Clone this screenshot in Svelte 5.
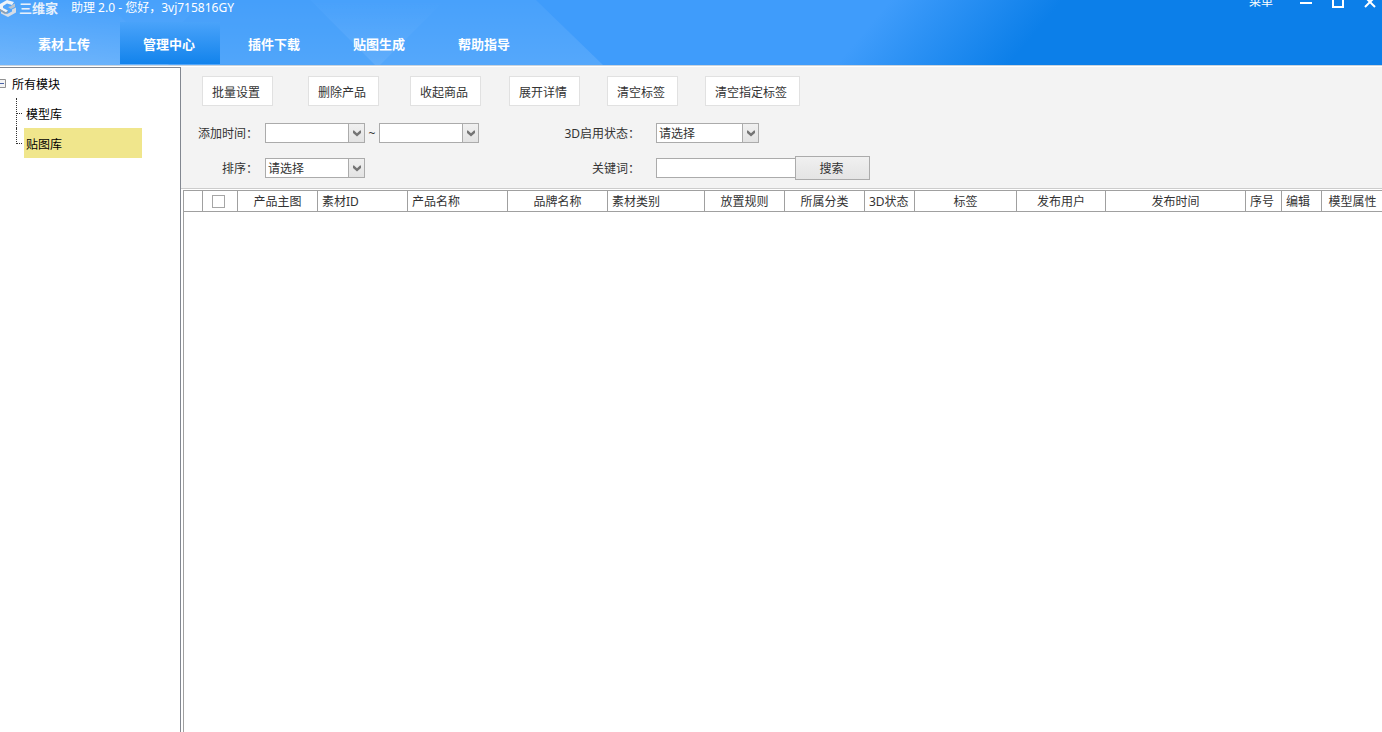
<script>
	let tabs = ['素材上传', '管理中心', '插件下载', '贴图生成', '帮助指导'];
	let activeTab = '管理中心';

	let actions = ['批量设置', '删除产品', '收起商品', '展开详情', '清空标签', '清空指定标签'];

	let modules = ['模型库', '贴图库'];
	let activeModule = '贴图库';

	let columns = [
		{ name: '', width: 19 },
		{ name: 'check', width: 35 },
		{ name: '产品主图', width: 80 },
		{ name: '素材ID', width: 90, left: true },
		{ name: '产品名称', width: 100, left: true },
		{ name: '品牌名称', width: 100 },
		{ name: '素材类别', width: 97, left: true },
		{ name: '放置规则', width: 80 },
		{ name: '所属分类', width: 80 },
		{ name: '3D状态', width: 50, left: true },
		{ name: '标签', width: 102 },
		{ name: '发布用户', width: 89 },
		{ name: '发布时间', width: 140 },
		{ name: '序号', width: 36, left: true },
		{ name: '编辑', width: 40, left: true },
		{ name: '模型属性', width: 61 },
	];

	let keyword = '';
	let allChecked = false;
</script>

{#snippet arrow()}
	<span class="arrow">
		<svg width="8" height="7" viewBox="0 0 8 7" aria-hidden="true">
			<path d="M0 0.5V3L4 6.5L8 3V0.5H7L4 3.2L1 0.5Z" fill="#757575" />
		</svg>
	</span>
{/snippet}

<div class="app">
	<header>
		<svg class="shapes" width="720" height="65" viewBox="0 0 720 65" aria-hidden="true">
			<defs>
				<linearGradient id="glow" x1="0" y1="0" x2="0" y2="1">
					<stop offset="0" stop-color="#fff" stop-opacity="0" />
					<stop offset="1" stop-color="#fff" stop-opacity="0.07" />
				</linearGradient>
				<linearGradient id="corner" x1="0" y1="1" x2="0.4" y2="0">
					<stop offset="0" stop-color="#fff" stop-opacity="0.16" />
					<stop offset="1" stop-color="#fff" stop-opacity="0" />
				</linearGradient>
			</defs>
			<path d="M0 0H536L603 65H0Z" fill="#fff" fill-opacity="0.05" />
			<path d="M0 0H536L603 65H0Z" fill="url(#glow)" />
			<path d="M0 0H104L169 65H0Z" fill="url(#corner)" />
			<path d="M310 0H445L380 65H375Z" fill="url(#glow)" />
			<path d="M205 0H310L375 65H140Z" fill="#0a7be6" fill-opacity="0.04" />
		</svg>

		<div class="titlebar">
			<svg class="logo" width="16" height="18" viewBox="0 0 16 18" aria-hidden="true">
				<path d="M0 4L7 0L14 2L12 5L7 3.5L3 6V8L8 10.5L6 12.5L0 9Z" fill="#eef3f8" />
				<path d="M12 5L15 3.5V7L11 9L8 7L11 6Z" fill="#b9c5d0" />
				<path d="M16 7.5V12.5L8 17L1 13.5V11L7 14L12 11.5V9.5Z" fill="#d5dde6" />
				<path d="M0 9L6 12.5L8 10.5V12.5L5 14L0 11Z" fill="#8fa0b0" />
			</svg>
			<strong>三维家</strong>
			<span class="title">助理 2.0 - 您好，3vj715816GY</span>
			<div class="window">
				<button class="menu">菜单</button>
				<button aria-label="最小化">
					<svg width="12" height="12" viewBox="0 0 12 12"><path d="M0 7H12" stroke="#fff" stroke-width="2" /></svg>
				</button>
				<button aria-label="最大化">
					<svg width="12" height="12" viewBox="0 0 12 12"><path d="M1 1H11V11H1Z" fill="none" stroke="#fff" stroke-width="2" /></svg>
				</button>
				<button aria-label="关闭">
					<svg width="12" height="12" viewBox="0 0 12 12"><path d="M1 1L11 11M11 1L1 11" stroke="#fff" stroke-width="2" /></svg>
				</button>
			</div>
		</div>

		<nav>
			{#each tabs as tab}
				<button class:active={tab === activeTab} on:click={() => (activeTab = tab)}>{tab}</button>
			{/each}
		</nav>
	</header>

	<div class="body">
		<aside>
			<button class="root">
				<svg width="6" height="9" viewBox="0 0 6 9" aria-hidden="true">
					<path d="M0 0.5H5.5V8.5H0" fill="#f4f4f4" stroke="#919191" />
					<path d="M0 4.5H4" stroke="#4b63a7" />
				</svg>
				<span>所有模块</span>
			</button>
			<ul>
				{#each modules as module}
					<li>
						<button class:selected={module === activeModule} on:click={() => (activeModule = module)}>{module}</button>
					</li>
				{/each}
			</ul>
		</aside>

		<main>
			<section class="panel">
				<div class="actions">
					{#each actions as action}
						<button>{action}</button>
					{/each}
				</div>

				<form on:submit|preventDefault>
					<label for="from">添加时间：</label>
					<div class="field">
						<span class="combo">
							<select id="from"><option></option></select>
							{@render arrow()}
						</span>
						<span class="tilde">~</span>
						<span class="combo">
							<select aria-label="结束时间"><option></option></select>
							{@render arrow()}
						</span>
					</div>
					<label for="state">3D启用状态：</label>
					<div class="field">
						<span class="combo wide">
							<select id="state"><option>请选择</option></select>
							{@render arrow()}
						</span>
					</div>

					<label for="sort">排序：</label>
					<div class="field">
						<span class="combo">
							<select id="sort"><option>请选择</option></select>
							{@render arrow()}
						</span>
					</div>
					<label for="keyword">关键词：</label>
					<div class="field">
						<input id="keyword" type="text" bind:value={keyword} />
						<button class="search">搜索</button>
					</div>
				</form>
			</section>

			<section class="grid">
				<table>
					<colgroup>
						{#each columns as col}
							<col style="width: {col.width}px" />
						{/each}
					</colgroup>
					<thead>
						<tr>
							{#each columns as col}
								<th class:left={col.left} class:check={col.name === 'check'}>
									{#if col.name === 'check'}
										<input type="checkbox" aria-label="全选" bind:checked={allChecked} />
									{:else}
										{col.name}
									{/if}
								</th>
							{/each}
						</tr>
					</thead>
				</table>
			</section>
		</main>
	</div>
</div>

<style>
	:global(body) {
		background: #fff;
	}
	.app {
		display: flex;
		flex-direction: column;
		min-height: 100vh;
		overflow: hidden;
		color: #333;
		font: 12px/16px 'Noto Sans', 'Noto Sans CJK SC', sans-serif;
	}
	button, input, select {
		box-sizing: border-box;
		margin: 0;
		padding: 0;
		border: 0;
		border-radius: 0;
		background: none;
		color: inherit;
		font: inherit;
	}
	svg {
		display: block;
	}

	header {
		position: relative;
		overflow: hidden;
		height: 65px;
		border-bottom: 1px solid #c9d3dd;
		background: linear-gradient(130deg, #3f9cfb 62%, #0c7fe9 74%);
		color: #fff;
	}
	.shapes {
		position: absolute;
		top: 0;
		left: 0;
	}
	.titlebar {
		position: relative;
		display: flex;
		height: 22px;
	}
	.logo {
		flex: none;
		margin-right: 3px;
	}
	strong {
		width: 52px;
		font-size: 13px;
		color: #e6f0fb;
	}
	.window {
		display: flex;
		align-items: center;
		gap: 20px;
		height: 16px;
		margin: -6px 6px 0 auto;
	}
	.window .menu {
		margin-right: 7px;
	}
	nav {
		position: relative;
		display: flex;
		gap: 5px;
		padding-left: 15px;
	}
	nav button {
		width: 100px;
		height: 42px;
		padding: 2px 2px 0 0;
		font-size: 13px;
		font-weight: bold;
	}
	nav .active {
		background: linear-gradient(#4aa3fa, #1283ec);
	}

	.body {
		display: flex;
		flex: 1;
		padding-top: 1px;
	}
	aside {
		box-sizing: border-box;
		flex: none;
		width: 181px;
		border: solid #828790;
		border-width: 1px 1px 0 0;
		color: #000;
	}
	.root {
		display: flex;
		align-items: center;
		gap: 6px;
		height: 30px;
	}
	.root span {
		padding-top: 3px;
	}
	ul {
		margin: 0;
		padding: 0 0 0 16px;
		list-style: none;
	}
	li {
		position: relative;
		height: 30px;
		padding-left: 8px;
	}
	li::before {
		content: '';
		position: absolute;
		top: 0;
		left: 0;
		width: 5px;
		height: 15px;
		border: dotted #333;
		border-width: 0 0 1px 1px;
	}
	li:not(:last-child)::after {
		content: '';
		position: absolute;
		top: 15px;
		bottom: 0;
		left: 0;
		border-left: 1px dotted #333;
	}
	li button {
		width: 118px;
		height: 30px;
		padding: 3px 0 0 2px;
		text-align: left;
	}
	li .selected {
		background: #f0e68c;
	}

	main {
		display: flex;
		flex: 1;
		flex-direction: column;
		min-width: 0;
	}
	.panel {
		padding: 9px 0 8px;
		border-bottom: 1px solid #ccc;
		background: #f3f3f3;
	}
	.actions {
		display: grid;
		grid-template-columns: 106px 102px 99px 98px 98px auto;
		justify-content: start;
		justify-items: start;
		padding-left: 21px;
	}
	.actions button {
		height: 30px;
		padding: 3px 12px 0 9px;
		border: 1px solid #e1e1e1;
		background: #fff;
		white-space: nowrap;
	}
	form {
		display: grid;
		grid-template-columns: 77px 305px 77px auto;
		grid-auto-rows: 24px;
		align-items: center;
		justify-content: start;
		gap: 11px 0;
		margin-top: 15px;
	}
	label {
		padding-top: 2px;
		text-align: right;
		white-space: nowrap;
	}
	.field {
		display: flex;
		align-items: center;
		padding-left: 7px;
	}
	label:nth-of-type(even) + .field {
		padding-left: 16px;
	}
	.combo {
		position: relative;
		display: flex;
		width: 100px;
	}
	.wide {
		width: 103px;
	}
	select, .field input {
		width: 100%;
		height: 20px;
		padding: 2px 2px 0;
		border: 1px solid #ababab;
		background: #fff;
		appearance: none;
	}
	.arrow {
		position: absolute;
		top: 1px;
		right: 1px;
		bottom: 1px;
		display: flex;
		align-items: center;
		justify-content: center;
		width: 15px;
		border-left: 1px solid #ababab;
		background: linear-gradient(#f0f0f0, #e3e3e3);
		pointer-events: none;
	}
	.tilde {
		width: 14px;
		padding-top: 2px;
		text-align: center;
	}
	.field input {
		width: 139px;
		border-right: 0;
	}
	.search {
		width: 75px;
		height: 24px;
		padding: 2px 2px 0 0;
		border: 1px solid #ababab;
		background: linear-gradient(#f0f0f0, #e4e4e4);
	}

	.grid {
		flex: 1;
		overflow: hidden;
		margin: 1px 0 0 2px;
		border: solid #a0a0a0;
		border-width: 1px 0 0 1px;
	}
	table {
		width: 1199px;
		table-layout: fixed;
		border-spacing: 0;
	}
	th {
		box-sizing: border-box;
		height: 21px;
		padding: 2px 0 0;
		border: solid #a0a0a0;
		border-width: 0 1px 1px 0;
		font-weight: normal;
		white-space: nowrap;
	}
	th:last-child {
		border-right: 0;
	}
	.left {
		padding-left: 4px;
		text-align: left;
	}
	.check {
		padding: 0 3px 0 0;
	}
	th input {
		display: block;
		width: 13px;
		height: 13px;
		margin: 0 auto;
		border: 1px solid #a6a6a6;
		background: #fff;
		appearance: none;
	}
	th input:checked {
		background: #5a7fb5;
	}
</style>
